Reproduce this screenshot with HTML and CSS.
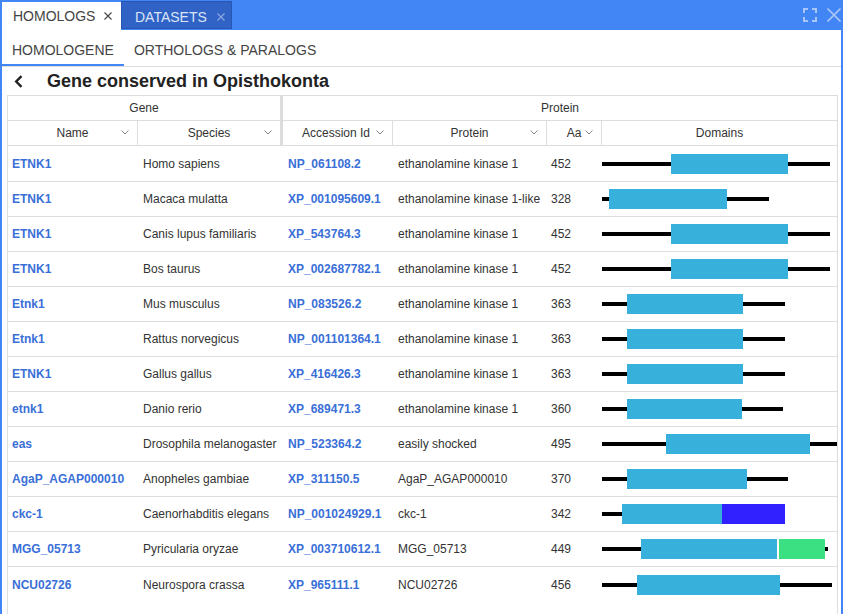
FILE: index.html
```html
<!DOCTYPE html>
<html>
<head>
<meta charset="utf-8">
<link rel="stylesheet" href="styles.css">
</head>
<body>
<div class="panel">
  <div class="tabbar">
    <div class="tab tab-active">
      <span>HOMOLOGS</span>
      <svg class="tab-x" width="8" height="8" viewBox="0 0 8 8"><path d="M0.5 0.5 L7.5 7.5 M7.5 0.5 L0.5 7.5" stroke="#444" stroke-width="1.1" fill="none"/></svg>
    </div>
    <div class="tab tab-dark">
      <span>DATASETS</span>
      <svg class="tab-x" width="8" height="8" viewBox="0 0 8 8"><path d="M0.5 0.5 L7.5 7.5 M7.5 0.5 L0.5 7.5" stroke="#8ea9e2" stroke-width="1.1" fill="none"/></svg>
    </div>
    <div class="win-icons">
      <svg width="14" height="14" viewBox="0 0 14 14"><path d="M1 5 V1 H5 M9 1 H13 V5 M13 9 V13 H9 M5 13 H1 V9" stroke="#a9c5f8" stroke-width="2" fill="none"/></svg>
      <svg width="14" height="14" viewBox="0 0 14 14"><path d="M0.5 0.5 L13.5 13.5 M13.5 0.5 L0.5 13.5" stroke="#a9c5f8" stroke-width="1.6" fill="none"/></svg>
    </div>
  </div>
  <div class="subtabs">
    <div class="subtab active">HOMOLOGENE</div>
    <div class="subtab">ORTHOLOGS &amp; PARALOGS</div>
  </div>
  <div class="titlebar">
    <svg class="back" width="10" height="13" viewBox="0 0 10 13"><polyline points="7.5,1.2 2.2,6.5 7.5,11.8" stroke="#222" stroke-width="2.4" fill="none"/></svg>
    <h1 class="title">Gene conserved in Opisthokonta</h1>
  </div>
  <div class="table">
    <div class="thead">
      <div class="th th-gene">Gene</div>
      <div class="th-sep"></div>
      <div class="th th-protein">Protein</div>
      <div class="th col bordered"><span class="lbl">Name</span><svg class="chev" width="8" height="5" viewBox="0 0 8 5"><polyline points="0.5,0.5 4,4 7.5,0.5" stroke="#888" stroke-width="1" fill="none"/></svg></div>
      <div class="th col"><span class="lbl">Species</span><svg class="chev" width="8" height="5" viewBox="0 0 8 5"><polyline points="0.5,0.5 4,4 7.5,0.5" stroke="#888" stroke-width="1" fill="none"/></svg></div>
      <div class="th col bordered acc"><span class="lbl">Accession Id</span><svg class="chev" width="8" height="5" viewBox="0 0 8 5"><polyline points="0.5,0.5 4,4 7.5,0.5" stroke="#888" stroke-width="1" fill="none"/></svg></div>
      <div class="th col bordered"><span class="lbl">Protein</span><svg class="chev" width="8" height="5" viewBox="0 0 8 5"><polyline points="0.5,0.5 4,4 7.5,0.5" stroke="#888" stroke-width="1" fill="none"/></svg></div>
      <div class="th col bordered"><span class="lbl">Aa</span><svg class="chev" width="8" height="5" viewBox="0 0 8 5"><polyline points="0.5,0.5 4,4 7.5,0.5" stroke="#888" stroke-width="1" fill="none"/></svg></div>
      <div class="th">Domains</div>
    </div>
    <div class="tbody">
    <div class="tr"><div class="td td-name"><a class="lnk">ETNK1</a></div><div class="td">Homo sapiens</div><div></div><div class="td"><a class="lnk">NP_061108.2</a></div><div class="td">ethanolamine kinase 1</div><div class="td td-aa">452</div>
      <div class="td td-dom"><svg width="235" height="34"><rect x="0" y="15" width="228" height="4" fill="#000"/><rect x="69" y="7" width="117" height="20" fill="#38b0dc"/></svg></div></div>

    <div class="tr"><div class="td td-name"><a class="lnk">ETNK1</a></div><div class="td">Macaca mulatta</div><div></div><div class="td"><a class="lnk">XP_001095609.1</a></div><div class="td">ethanolamine kinase 1-like</div><div class="td td-aa">328</div>
      <div class="td td-dom"><svg width="235" height="34"><rect x="0" y="15" width="167" height="4" fill="#000"/><rect x="7" y="7" width="118" height="20" fill="#38b0dc"/></svg></div></div>

    <div class="tr"><div class="td td-name"><a class="lnk">ETNK1</a></div><div class="td">Canis lupus familiaris</div><div></div><div class="td"><a class="lnk">XP_543764.3</a></div><div class="td">ethanolamine kinase 1</div><div class="td td-aa">452</div>
      <div class="td td-dom"><svg width="235" height="34"><rect x="0" y="15" width="228" height="4" fill="#000"/><rect x="69" y="7" width="117" height="20" fill="#38b0dc"/></svg></div></div>

    <div class="tr"><div class="td td-name"><a class="lnk">ETNK1</a></div><div class="td">Bos taurus</div><div></div><div class="td"><a class="lnk">XP_002687782.1</a></div><div class="td">ethanolamine kinase 1</div><div class="td td-aa">452</div>
      <div class="td td-dom"><svg width="235" height="34"><rect x="0" y="15" width="228" height="4" fill="#000"/><rect x="69" y="7" width="117" height="20" fill="#38b0dc"/></svg></div></div>

    <div class="tr"><div class="td td-name"><a class="lnk">Etnk1</a></div><div class="td">Mus musculus</div><div></div><div class="td"><a class="lnk">NP_083526.2</a></div><div class="td">ethanolamine kinase 1</div><div class="td td-aa">363</div>
      <div class="td td-dom"><svg width="235" height="34"><rect x="0" y="15" width="183" height="4" fill="#000"/><rect x="25" y="7" width="116" height="20" fill="#38b0dc"/></svg></div></div>

    <div class="tr"><div class="td td-name"><a class="lnk">Etnk1</a></div><div class="td">Rattus norvegicus</div><div></div><div class="td"><a class="lnk">NP_001101364.1</a></div><div class="td">ethanolamine kinase 1</div><div class="td td-aa">363</div>
      <div class="td td-dom"><svg width="235" height="34"><rect x="0" y="15" width="183" height="4" fill="#000"/><rect x="25" y="7" width="116" height="20" fill="#38b0dc"/></svg></div></div>

    <div class="tr"><div class="td td-name"><a class="lnk">ETNK1</a></div><div class="td">Gallus gallus</div><div></div><div class="td"><a class="lnk">XP_416426.3</a></div><div class="td">ethanolamine kinase 1</div><div class="td td-aa">363</div>
      <div class="td td-dom"><svg width="235" height="34"><rect x="0" y="15" width="183" height="4" fill="#000"/><rect x="25" y="7" width="116" height="20" fill="#38b0dc"/></svg></div></div>

    <div class="tr"><div class="td td-name"><a class="lnk">etnk1</a></div><div class="td">Danio rerio</div><div></div><div class="td"><a class="lnk">XP_689471.3</a></div><div class="td">ethanolamine kinase 1</div><div class="td td-aa">360</div>
      <div class="td td-dom"><svg width="235" height="34"><rect x="0" y="15" width="181" height="4" fill="#000"/><rect x="25" y="7" width="115" height="20" fill="#38b0dc"/></svg></div></div>

    <div class="tr"><div class="td td-name"><a class="lnk">eas</a></div><div class="td">Drosophila melanogaster</div><div></div><div class="td"><a class="lnk">NP_523364.2</a></div><div class="td">easily shocked</div><div class="td td-aa">495</div>
      <div class="td td-dom"><svg width="235" height="34"><rect x="0" y="15" width="235" height="4" fill="#000"/><rect x="64" y="7" width="144" height="20" fill="#38b0dc"/></svg></div></div>

    <div class="tr"><div class="td td-name"><a class="lnk">AgaP_AGAP000010</a></div><div class="td">Anopheles gambiae</div><div></div><div class="td"><a class="lnk">XP_311150.5</a></div><div class="td">AgaP_AGAP000010</div><div class="td td-aa">370</div>
      <div class="td td-dom"><svg width="235" height="34"><rect x="0" y="15" width="186" height="4" fill="#000"/><rect x="25" y="7" width="120" height="20" fill="#38b0dc"/></svg></div></div>

    <div class="tr"><div class="td td-name"><a class="lnk">ckc-1</a></div><div class="td">Caenorhabditis elegans</div><div></div><div class="td"><a class="lnk">NP_001024929.1</a></div><div class="td">ckc-1</div><div class="td td-aa">342</div>
      <div class="td td-dom"><svg width="235" height="34"><rect x="0" y="15" width="22" height="4" fill="#000"/><rect x="20" y="7" width="100" height="20" fill="#38b0dc"/><rect x="120" y="7" width="63" height="20" fill="#3120ff"/></svg></div></div>

    <div class="tr"><div class="td td-name"><a class="lnk">MGG_05713</a></div><div class="td">Pyricularia oryzae</div><div></div><div class="td"><a class="lnk">XP_003710612.1</a></div><div class="td">MGG_05713</div><div class="td td-aa">449</div>
      <div class="td td-dom"><svg width="235" height="34"><rect x="0" y="15" width="226" height="4" fill="#000"/><rect x="39" y="7" width="136" height="20" fill="#38b0dc"/><rect x="175" y="7" width="2" height="20" fill="#fff"/><rect x="177" y="7" width="46" height="20" fill="#3ae082"/></svg></div></div>

    <div class="tr"><div class="td td-name"><a class="lnk">NCU02726</a></div><div class="td">Neurospora crassa</div><div></div><div class="td"><a class="lnk">XP_965111.1</a></div><div class="td">NCU02726</div><div class="td td-aa">456</div>
      <div class="td td-dom"><svg width="235" height="34"><rect x="0" y="15" width="230" height="4" fill="#000"/><rect x="35" y="7" width="143" height="20" fill="#38b0dc"/></svg></div></div>
    </div>
  </div>
</div>
</body>
</html>
```
FILE: styles.css
```css
* { box-sizing: border-box; }
html, body { margin: 0; padding: 0; }
body {
  font-family: "Liberation Sans", Arial, sans-serif;
  color: #333;
  background: #fff;
  overflow: hidden;
}
.panel {
  width: 843px;
  height: 614px;
  border-left: 2px solid #4285f4;
  border-right: 2px solid #4285f4;
  display: flex;
  flex-direction: column;
}
.tabbar {
  flex: none;
  height: 30px;
  background: #4285f4;
  display: flex;
  align-items: flex-start;
}
.tab {
  display: flex;
  align-items: center;
  font-size: 14px;
  white-space: nowrap;
}
.tab-active {
  margin-top: 2px;
  height: 28px;
  width: 119px;
  background: #fff;
  padding-left: 11px;
  gap: 9px;
  color: #444;
}
.tab-dark {
  margin-top: 1px;
  margin-left: 0;
  height: 28px;
  width: 111px;
  background: #3063c5;
  border: 1px solid #2856b3;
  padding-left: 13px;
  padding-top: 3px;
  gap: 10px;
  color: #dbe4f6;
}
.tab-x { flex: none; }
.win-icons {
  margin-left: auto;
  margin-top: 8px;
  display: flex;
  gap: 10px;
}
.subtabs {
  flex: none;
  display: flex;
  border-bottom: 1px solid #ddd;
}
.subtab {
  height: 36px;
  padding: 12px 10px 0;
  font-size: 14px;
  line-height: 16px;
  color: #444;
  border-bottom: 2px solid transparent;
  white-space: nowrap;
}
.subtab.active { border-bottom-color: #4285f4; }
.titlebar {
  flex: none;
  height: 28px;
  display: flex;
  align-items: center;
  padding-left: 12px;
}
.back { flex: none; }
.title {
  margin: 0 0 0 23px;
  font-size: 18px;
  font-weight: bold;
  color: #222;
}
.table {
  flex: 1;
  margin: 0 3px 0 5px;
  border: 1px solid #ddd;
  border-bottom: none;
}
.thead {
  display: grid;
  grid-template-columns: 130px 142px 3px 110px 154px 55px 235px;
  grid-template-rows: 25px 25px;
}
.th {
  display: flex;
  align-items: center;
  justify-content: center;
  border-bottom: 1px solid #ddd;
  font-size: 12px;
  color: #333;
  white-space: nowrap;
}
.th-gene { grid-column: 1 / 3; }
.th-sep { grid-column: 3; grid-row: 1 / 3; background: #dcdcdc; }
.th-protein { grid-column: 4 / 8; }
.th.col {
  display: grid;
  grid-template-columns: 1fr auto 1fr;
  align-items: center;
}
.th.col .lbl { grid-column: 2; }
.th.col .chev { grid-column: 3; justify-self: end; margin-right: 8px; margin-top: -2px; }
.th.acc .chev { justify-self: start; margin-left: 6px; }
.bordered { border-right: 1px solid #ddd; }
.tbody { padding-top: 1px; }
.tr {
  display: grid;
  grid-template-columns: 130px 142px 3px 110px 154px 55px 235px;
  height: 35px;
  border-bottom: 1px solid #ddd;
  font-size: 12px;
}
.tr:last-child { border-bottom: none; }
.td {
  display: flex;
  align-items: center;
  padding-left: 5px;
  white-space: nowrap;
  color: #333;
}
.td-name { padding-left: 4px; }
.td-aa { padding-left: 4px; }
.td-dom { padding-left: 0; }
.td-dom svg { display: block; }
.lnk {
  color: #3a6fd8;
  font-weight: bold;
  text-decoration: none;
}
```
